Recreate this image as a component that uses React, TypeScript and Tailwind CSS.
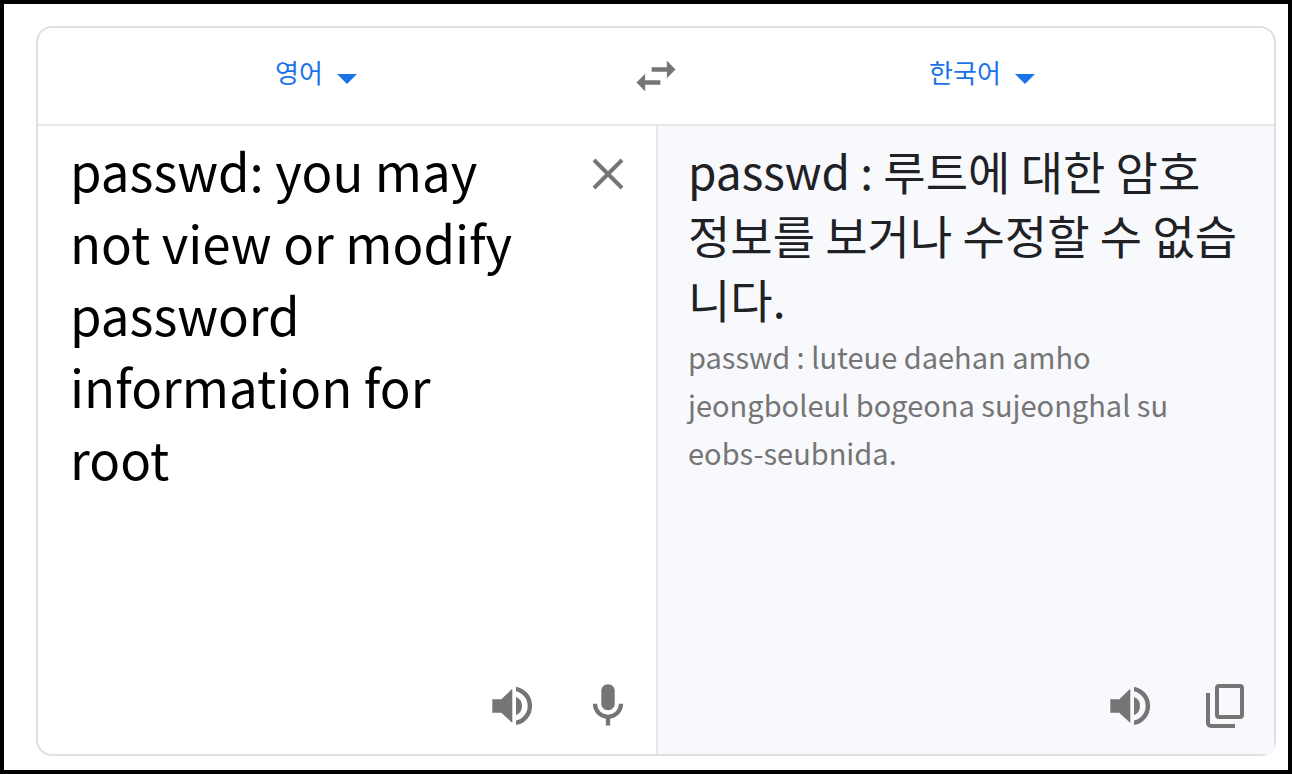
import { useState } from 'react';

/* ===================================================================
 * Translator: language bar on top, source and result panes below.
 * =================================================================== */

const languages = ['영어', '한국어'];

const SOURCE_TEXT =
  'passwd: you may not view or modify password information for root';
const TRANSLATED_TEXT = 'passwd : 루트에 대한 암호 정보를 보거나 수정할 수 없습니다.';
const ROMANIZED_TEXT =
  'passwd : luteue daehan amho jeongboleul bogeona sujeonghal su eobs-seubnida.';

// ─── Icons ───────────────────────────────────────────────────────────
function SwapIcon() {
  return (
    <svg viewBox="0 0 24 24" className="size-13 fill-current" aria-hidden="true">
      <path d="M6.99 11L3 15l3.99 4v-3H14v-2H6.99v-3zM21 9l-3.99-4v3H10v2h7.01v3L21 9z" />
    </svg>
  );
}

function SpeakerIcon() {
  return (
    <svg viewBox="0 0 48 48" className="size-12 fill-current" aria-hidden="true">
      <path d="M4.3 17.3h9L24.3 6.7V41L13.3 30.7h-9z" />
      <path d="M28 15a9.75 9.75 0 0 1 0 18z" />
      <path d="M28 4.7a19.5 19.5 0 0 1 0 38.4v-4.5a15.1 15.1 0 0 0 0-29.4z" />
    </svg>
  );
}

function MicIcon() {
  return (
    <svg viewBox="0 0 24 24" className="size-13 fill-current" aria-hidden="true">
      <path d="M12 14c1.7 0 3.1-1.34 3.1-3V5c0-1.66-1.4-3-3.1-3S8.9 3.34 8.9 5v6c0 1.66 1.4 3 3.1 3z" />
      <path d="M17 11c0 2.76-2.24 5-5 5s-5-2.24-5-5H5c0 3.53 2.61 6.43 6 6.92V21h2v-3.08c3.39-.49 6-3.39 6-6.92h-2z" />
    </svg>
  );
}

function CopyIcon() {
  return (
    <svg
      viewBox="0 0 48 48"
      className="size-12 fill-none stroke-current stroke-4"
      aria-hidden="true"
    >
      <rect x="15" y="4" width="25" height="31" rx="2" />
      <path d="M6 11v30a3 3 0 0 0 3 3h24" />
    </svg>
  );
}

function ClearIcon() {
  return (
    <svg
      viewBox="0 0 48 48"
      className="size-12 stroke-current stroke-4"
      aria-hidden="true"
    >
      <path d="M10 10l28 28M38 10L10 38" />
    </svg>
  );
}

// ─── Language picker ─────────────────────────────────────────────────
interface LanguageSelectProps {
  label: string;
  value: string;
  onChange: (value: string) => void;
}

function LanguageSelect({ label, value, onChange }: LanguageSelectProps) {
  return (
    <label className="flex flex-1 items-center justify-center text-[#1a73e8]">
      <select
        aria-label={label}
        value={value}
        onChange={(e) => onChange(e.target.value)}
        className="appearance-none bg-transparent pb-2 text-[26px] leading-10 outline-none [field-sizing:content]"
      >
        {languages.map((language) => (
          <option key={language}>{language}</option>
        ))}
      </select>
      <svg viewBox="0 0 24 24" className="mt-1 size-12 fill-current" aria-hidden="true">
        <path d="M7 10l5 5 5-5z" />
      </svg>
    </label>
  );
}

export default function App() {
  const [from, setFrom] = useState('영어');
  const [to, setTo] = useState('한국어');
  const [text, setText] = useState(SOURCE_TEXT);

  const swapLanguages = () => {
    setFrom(to);
    setTo(from);
  };

  return (
    <main className="flex min-h-screen border-4 border-black bg-white pt-[22px] pr-3 pb-3.5 pl-8 font-['Noto_Sans_CJK_KR',sans-serif] text-[#757575]">
      <div className="flex flex-1 flex-col rounded-2xl border-2 border-[#e0e0e0]">
        {/* ── Language bar ─────────────────────────────────────────── */}
        <header className="flex h-[98px] items-center border-b-2 border-[#e8e8e8]">
          <LanguageSelect label="Source language" value={from} onChange={setFrom} />
          <button
            type="button"
            onClick={swapLanguages}
            className="flex w-24 justify-center"
            aria-label="Swap languages"
          >
            <SwapIcon />
          </button>
          <LanguageSelect label="Target language" value={to} onChange={setTo} />
        </header>

        <div className="grid flex-1 grid-cols-2">
          {/* ── Source ─────────────────────────────────────────────── */}
          <section className="flex flex-col pt-2 pr-6 pb-[22px] pl-8">
            <div className="flex flex-1 items-start justify-between">
              <textarea
                aria-label="Source text"
                value={text}
                onChange={(e) => setText(e.target.value)}
                spellCheck={false}
                className="h-full w-[456px] resize-none overflow-hidden text-[51px] leading-[72px] text-black outline-none"
              />
              <button
                type="button"
                onClick={() => setText('')}
                className="mt-4"
                aria-label="Clear source text"
              >
                <ClearIcon />
              </button>
            </div>
            <div className="flex items-center justify-end gap-12">
              <button type="button" aria-label="Listen to source text">
                <SpeakerIcon />
              </button>
              <button type="button" className="-mx-0.5" aria-label="Translate by voice">
                <MicIcon />
              </button>
            </div>
          </section>

          {/* ── Translation ────────────────────────────────────────── */}
          <section className="flex flex-col border-l-2 border-[#e8e8e8] bg-[#f8f9fc] pt-3 pr-6 pb-6 pl-[30px]">
            <div className="flex-1">
              <p className="text-[46px] leading-16 text-[#202124]">{TRANSLATED_TEXT}</p>
              <p className="mt-0.5 mr-16 text-[29px] leading-12">{ROMANIZED_TEXT}</p>
            </div>
            <div className="flex items-center justify-end gap-12">
              <button type="button" aria-label="Listen to translation">
                <SpeakerIcon />
              </button>
              <button type="button" aria-label="Copy translation">
                <CopyIcon />
              </button>
            </div>
          </section>
        </div>
      </div>
    </main>
  );
}
